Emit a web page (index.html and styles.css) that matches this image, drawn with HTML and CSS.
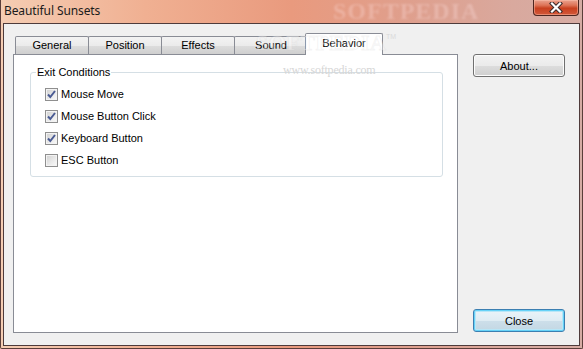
FILE: index.html
```html
<!DOCTYPE html>
<html lang="en">
<head>
  <meta charset="UTF-8" />
  <meta name="viewport" content="width=device-width, initial-scale=1" />
  <title>Beautiful Sunsets</title>
  <link rel="stylesheet" href="styles.css">
</head>
<body>

  <div class="window">
    <div class="titlebar">
      <span class="title">Beautiful Sunsets</span>
      <span class="wm-title">SOFTPEDIA</span>
      <button class="close-x" aria-label="Close">
        <svg width="14" height="11" viewBox="0 0 14 11">
          <path d="M3 1.5 L11 9.5 M11 1.5 L3 9.5" stroke="#3a2a2a" stroke-width="4.2" stroke-linecap="square"/>
          <path d="M3 1.5 L11 9.5 M11 1.5 L3 9.5" stroke="#ffffff" stroke-width="2.2" stroke-linecap="square"/>
        </svg>
      </button>
    </div>

    <div class="client">
      <div class="tabs">
        <div class="tabstrip">
          <div class="tab">General</div>
          <div class="tab">Position</div>
          <div class="tab">Effects</div>
          <div class="tab">Sound</div>
          <div class="tab active">Behavior</div>
        </div>
        <div class="panel">
          <fieldset class="group">
            <legend>Exit Conditions</legend>
            <label class="check"><span class="box on"></span>Mouse Move</label>
            <label class="check"><span class="box on"></span>Mouse Button Click</label>
            <label class="check"><span class="box on"></span>Keyboard Button</label>
            <label class="check"><span class="box"></span>ESC Button</label>
          </fieldset>
        </div>
      </div>

      <div class="side">
        <button class="btn">About...</button>
        <button class="btn default">Close</button>
      </div>
    </div>
  </div>

  <!-- watermark stamped on the capture -->
  <span class="wm-big">SOFTPEDIA</span>
  <span class="wm-tm">TM</span>
  <span class="wm-url">www.softpedia.com</span>

</body>
</html>
```

FILE: styles.css
```css
body {
  margin: 0;
  width: 583px;
  height: 349px;
  overflow: hidden;
  font-family: 'Liberation Sans', Arial, sans-serif;
  font-size: 11px;
  color: #000;
  position: relative;
  background: linear-gradient(90deg, #f5cdb3 0%, #f0b092 25%, #e99a7e 50%, #df9f8d 70%, #d9a99e 88%, #d6aca4 100%);
}
.window {
  width: 583px;
  height: 349px;
  display: flex;
  flex-direction: column;
  box-sizing: border-box;
  border: 1px solid #5b3e3a;
  border-top: none;
  border-radius: 0 0 2px 2px;
}
.titlebar {
  height: 23px;
  display: flex;
  align-items: center;
  position: relative;
  flex-shrink: 0;
}
.title {
  font-family: 'Noto Sans', 'Open Sans', sans-serif;
  font-size: 12px;
  color: #1b1b1b;
  padding-left: 3px;
  margin-top: -2px;
  letter-spacing: -0.1px;
}
.wm-title {
  position: absolute;
  left: 332px;
  top: 0;
  font-family: 'Liberation Serif', serif;
  font-weight: bold;
  font-size: 24px;
  line-height: 22px;
  letter-spacing: 1px;
  color: rgba(255, 230, 230, 0.3);
  filter: blur(1.2px);
}
.close-x {
  position: absolute;
  right: 3px;
  top: 0;
  width: 46px;
  height: 16px;
  padding: 0;
  border: 1px solid #4d2620;
  border-top: none;
  border-radius: 0 0 4px 4px;
  background: linear-gradient(#eaa28f 0%, #de7458 35%, #c8401f 55%, #d2583a 100%);
  box-shadow: inset 0 0 0 1px rgba(255, 200, 180, 0.45);
  display: flex;
  align-items: center;
  justify-content: center;
}
.client {
  flex: 1;
  margin: 0 2px 2px 2px;
  background: #f0f0f0;
  border: 1px solid #4e3b3b;
  display: flex;
  padding: 9px 14px 12px 9px;
}
.tabs {
  width: 445px;
  display: flex;
  flex-direction: column;
}
.tabstrip {
  height: 21px;
  display: flex;
  align-items: flex-end;
  padding-left: 2px;
}
.tab {
  box-sizing: border-box;
  width: 74px;
  height: 18px;
  margin-right: -1px;
  border: 1px solid #898c95;
  border-bottom: none;
  border-radius: 2px 2px 0 0;
  background: linear-gradient(#f3f3f3 0%, #ebebeb 50%, #dddddd 51%, #cfcfcf 100%);
  text-align: center;
  line-height: 17px;
}
.tab.active {
  width: 78px;
  height: 22px;
  margin: 0 -2px -1px -2px;
  background: #fff;
  position: relative;
  z-index: 1;
  line-height: 18px;
}
.panel {
  flex: 1;
  background: #fff;
  border: 1px solid #898c95;
  padding: 11px 0 0 16px;
}
.group {
  box-sizing: border-box;
  width: 413px;
  margin: 0;
  padding: 4px 0 5px 5px;
  border: 1px solid #d5dfe5;
  border-radius: 3px;
}
.group legend {
  padding: 0 1px;
  line-height: 13px;
}
.check {
  height: 22px;
  display: flex;
  align-items: center;
  padding-left: 9px;
}
.box {
  box-sizing: border-box;
  width: 13px;
  height: 13px;
  margin-right: 3px;
  border: 1px solid #8f8f8f;
  background: linear-gradient(135deg, #cfcfcf 0%, #e9e9e9 55%, #fbfbfb 100%);
  box-shadow: inset 0 0 0 1px #f3f3f3;
}
.box.on {
  background-image: url("data:image/svg+xml;utf8,<svg xmlns='http://www.w3.org/2000/svg' width='11' height='11' viewBox='0 0 11 11'><path d='M2 5.5 L4.3 8 L9 2' fill='none' stroke='%234a5b93' stroke-width='2'/></svg>"), linear-gradient(135deg, #cfcfcf 0%, #e9e9e9 55%, #fbfbfb 100%);
  background-repeat: no-repeat;
  background-position: center;
}
.side {
  width: 92px;
  margin-left: 15px;
  padding: 21px 0 1px 0;
  display: flex;
  flex-direction: column;
  justify-content: space-between;
}
.btn {
  width: 92px;
  height: 23px;
  padding: 0;
  font-family: 'Liberation Sans', Arial, sans-serif;
  font-size: 11px;
  color: #000;
  border: 1px solid #707070;
  border-radius: 3px;
  background: linear-gradient(#f2f2f2 0%, #ebebeb 50%, #dddddd 51%, #cfcfcf 100%);
  box-shadow: inset 0 0 0 1px #fcfcfc;
}
.btn.default {
  border-color: #3c7fb1;
  background: linear-gradient(#eaf4f9 0%, #dfecf3 50%, #cddfea 51%, #c3d7e3 100%);
  box-shadow: inset 0 0 0 1px #66d2f7, inset 0 0 0 2px #b8e6f7;
}
.wm-big {
  position: absolute;
  left: 256px;
  top: 30px;
  font-family: 'Liberation Serif', serif;
  font-weight: bold;
  font-size: 22px;
  letter-spacing: 0.5px;
  color: rgba(255, 255, 255, 0.35);
  -webkit-text-stroke: 1px rgba(200, 200, 200, 0.2);
  pointer-events: none;
  z-index: 2;
}
.wm-tm {
  position: absolute;
  left: 386px;
  top: 33px;
  font-size: 7px;
  color: #dadada;
}
.wm-url {
  position: absolute;
  left: 283px;
  top: 63px;
  font-family: 'Liberation Serif', serif;
  font-size: 12px;
  color: #d6d6d6;
  letter-spacing: -0.2px;
  pointer-events: none;
}
```
